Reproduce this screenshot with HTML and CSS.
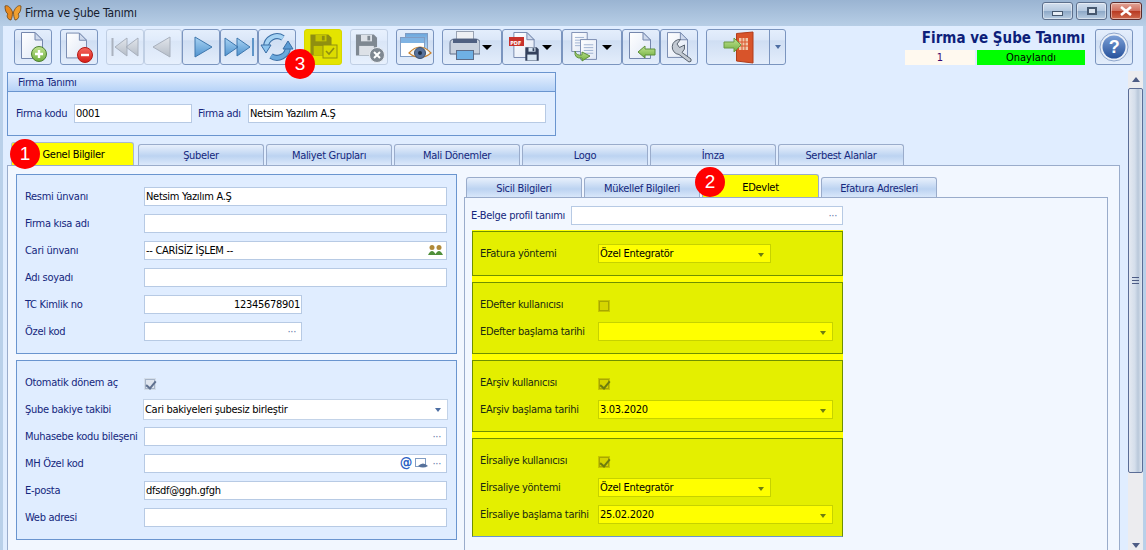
FILE: index.html
```html
<!DOCTYPE html>
<html>
	<head>
		<meta charset="utf-8">
		<title>Firma ve Şube Tanımı</title>
		<link rel="stylesheet" href="styles.css">
	</head>
	<body>
		<svg class="defs">
			<defs>
				<linearGradient id="docFill" x1="0" y1="0" x2="1" y2="1"><stop offset="0" stop-color="#ffffff"/><stop offset="1" stop-color="#dfe7f5"/></linearGradient>
				<linearGradient id="playFill" x1="0" y1="0" x2="0" y2="1"><stop offset="0" stop-color="#a9d3f3"/><stop offset="1" stop-color="#4f93cf"/></linearGradient>
				<linearGradient id="grayFill" x1="0" y1="0" x2="0" y2="1"><stop offset="0" stop-color="#e2e6ec"/><stop offset="1" stop-color="#b4bcc7"/></linearGradient>
				<linearGradient id="greenFill" x1="0" y1="0" x2="0" y2="1"><stop offset="0" stop-color="#c3e592"/><stop offset="1" stop-color="#6fae3e"/></linearGradient>
				<linearGradient id="redFill" x1="0" y1="0" x2="0" y2="1"><stop offset="0" stop-color="#f5695f"/><stop offset="1" stop-color="#d81c17"/></linearGradient>
				<linearGradient id="helpFill" x1="0" y1="0" x2="0" y2="1"><stop offset="0" stop-color="#7b9fd6"/><stop offset="1" stop-color="#26519b"/></linearGradient>
				<linearGradient id="winFill" x1="0" y1="0" x2="0" y2="1"><stop offset="0" stop-color="#6ba6dc"/><stop offset="1" stop-color="#b6d6f2"/></linearGradient>
				<symbol id="doc" viewBox="0 0 22 27">
					<path d="M.5 .5H14L21.5 8V26.5H.5Z" fill="url(#docFill)" stroke="#7587ad"/>
					<path d="M14 .5V8H21.5Z" fill="#cfdaed" stroke="#7587ad"/>
				</symbol>
				<symbol id="floppy" viewBox="0 0 24 24">
					<path d="M.5 .5H20L23.5 4V23.5H.5Z" fill="currentColor"/>
					<rect class="fl-light" x="6" y="1" width="12" height="7"/>
					<rect x="13" y="2" width="3" height="5" fill="currentColor"/>
					<rect class="fl-light" x="4" y="13" width="16" height="10"/>
				</symbol>
				<symbol id="sheet" viewBox="0 0 18 22">
					<path d="M.5 .5H17.5V21.5H.5Z" fill="url(#docFill)" stroke="#7587ad"/>
					<path d="M4 6H14M4 9H14M4 12H14M4 15H14" stroke="#9db0cf"/>
				</symbol>
			</defs>
		</svg>

		<div class="window">
			<div class="titlebar">
				<svg class="butterfly" width="18" height="18" viewBox="0 0 18 18">
					<path d="M8.500 8C6 2 3 1 1 2C1 6 2 9 4 10C2 12 4 16 7 16C8 14 8.500 11 8.500 8Z" fill="#e8891e" stroke="#6b4415" stroke-width=".8"/>
					<path d="M9.500 8C12 2 15 1 17 2C17 6 16 9 14 10C16 12 14 16 11 16C10 14 9.500 11 9.500 8Z" fill="#f0a030" stroke="#6b4415" stroke-width=".8"/>
				</svg>
				<span class="title-text">Firma ve Şube Tanımı</span>
				<div class="win-controls">
					<div class="win-btn"><span class="glyph-min"></span></div>
					<div class="win-btn"><span class="glyph-max"></span></div>
					<div class="win-btn win-close">
						<svg width="14" height="10" viewBox="0 0 14 10"><path d="M2 1L12 9M12 1L2 9" stroke="#fff" stroke-width="2.600"/></svg>
					</div>
				</div>
			</div>

			<div class="body">
				<div class="toolbar">
					<div class="tool">
						<svg class="ico" viewBox="0 0 38 36"><use href="#doc" x="7" y="3" width="22" height="27"/><circle cx="25" cy="25" r="7.500" fill="url(#greenFill)" stroke="#4d7f33"/><path d="M25 21V29M21 25H29" stroke="#fff" stroke-width="2.400"/></svg>
					</div>
					<div class="tool">
						<svg class="ico" viewBox="0 0 38 36"><use href="#doc" x="6" y="3" width="21" height="27"/><circle cx="25" cy="26" r="7.500" fill="url(#redFill)" stroke="#b51a14"/><path d="M21 26H29" stroke="#fff" stroke-width="2.400"/></svg>
					</div>
					<div class="tool-group">
						<div class="tool tool-off">
							<svg class="ico" viewBox="0 0 38 36"><path d="M6.500 9V27" stroke="#aab2bf" stroke-width="2"/><path d="M9 18L21 9V27ZM20 18L32 9V27Z" fill="url(#grayFill)" stroke="#a8b0bd"/></svg>
						</div>
						<div class="tool tool-off">
							<svg class="ico" viewBox="0 0 38 36"><path d="M9 18L26 8V28Z" fill="url(#grayFill)" stroke="#a8b0bd"/></svg>
						</div>
						<div class="tool">
							<svg class="ico" viewBox="0 0 38 36"><path d="M13 8L30 18L13 28Z" fill="url(#playFill)" stroke="#3f77ad"/></svg>
						</div>
						<div class="tool">
							<svg class="ico" viewBox="0 0 38 36"><path d="M5 9L18 18L5 27ZM17 9L30 18L17 27Z" fill="url(#playFill)" stroke="#3f77ad"/><path d="M33 9V27" stroke="#5f95c8" stroke-width="2"/></svg>
						</div>
						<div class="tool">
							<svg class="ico" viewBox="0 0 38 36">
								<path d="M8 18A11 11 0 0 1 25 9" fill="none" stroke="#3a6ea5" stroke-width="6"/>
								<path d="M8 18A11 11 0 0 1 25 9" fill="none" stroke="#a4d2f3" stroke-width="4"/>
								<path d="M30 18A11 11 0 0 1 13 27" fill="none" stroke="#3a6ea5" stroke-width="6"/>
								<path d="M30 18A11 11 0 0 1 13 27" fill="none" stroke="#6aa8dc" stroke-width="4"/>
								<path d="M3 16H13L8 24Z" fill="#8cc4ee" stroke="#3a6ea5"/>
								<path d="M25 20H35L30 12Z" fill="#5b9bd4" stroke="#3a6ea5"/>
							</svg>
						</div>
					</div>
					<div class="tool tool-marked">
						<svg class="ico floppy-olive" viewBox="0 0 38 36"><use href="#floppy" x="5" y="5" width="24" height="22"/><rect x="19" y="16" width="14" height="13" fill="#dcdc00" stroke="#8f8f10"/><path d="M22 22L25 25L30 19" fill="none" stroke="#8f8f10" stroke-width="1.600"/></svg>
					</div>
					<div class="tool tool-off">
						<svg class="ico floppy-gray" viewBox="0 0 38 36"><use href="#floppy" x="5" y="5" width="23" height="22"/><circle cx="27" cy="26" r="7.500" fill="#7f8891" stroke="#e8ecf2"/><path d="M24 23L30 29M30 23L24 29" stroke="#fff" stroke-width="2"/></svg>
					</div>
					<div class="tool">
						<svg class="ico" viewBox="0 0 38 36">
							<rect x="9.500" y="4.500" width="22" height="16" fill="url(#winFill)" stroke="#7f9cc4"/>
							<rect x="4.500" y="8.500" width="24" height="19" fill="#fff" stroke="#7f9cc4"/>
							<rect x="5" y="9" width="23" height="5" fill="#7fb3e3"/>
							<path d="M13 24Q24 12 35 24Q24 33 13 24Z" fill="#f4f4f0" stroke="#c9822e" stroke-width="1.200"/>
							<circle cx="24" cy="24" r="5.500" fill="#56719b" stroke="#39506f"/>
							<circle cx="24" cy="24" r="2" fill="#1f2f45"/>
						</svg>
					</div>
					<div class="tool tool-wide">
						<svg class="ico" viewBox="0 0 38 36">
							<rect x="14.500" y="2.500" width="17" height="12" fill="#eef0f4" stroke="#98a2b3"/>
							<path d="M8 14Q8 10 13 10H33Q38 10 38 14V25H8Z" fill="#c9d1de" stroke="#5d6c88"/>
							<rect x="11" y="10" width="24" height="4" fill="#4f5f80"/>
							<rect x="14.500" y="21.500" width="17" height="9" fill="#6fb0e4" stroke="#5d6c88"/>
						</svg>
						<span class="caret"></span>
					</div>
					<div class="tool tool-wide">
						<svg class="ico floppy-dark" viewBox="0 0 38 36">
							<use href="#doc" x="11" y="3" width="22" height="26"/>
							<rect x="7" y="8" width="15" height="9" fill="#c8322b"/>
							<text class="pdf-mark" x="8.200" y="15.500">PDF</text>
							<use href="#floppy" x="23" y="18" width="14" height="14"/>
						</svg>
						<span class="caret"></span>
					</div>
					<div class="tool tool-wide">
						<svg class="ico" viewBox="0 0 38 36">
							<use href="#sheet" x="9" y="3" width="17" height="20"/>
							<use href="#sheet" x="18" y="10" width="17" height="21"/>
							<path d="M13 22Q14 27 20 26V23L28 27L20 32V29Q12 30 13 22Z" fill="url(#greenFill)" stroke="#5d8f3a"/>
						</svg>
						<span class="caret"></span>
					</div>
					<div class="tool-group">
						<div class="tool">
							<svg class="ico" viewBox="0 0 38 36"><use href="#doc" x="7" y="3" width="22" height="27"/><path d="M16 23L23 17V20H33V26H23V29Z" fill="url(#greenFill)" stroke="#5d8f3a"/></svg>
						</div>
						<div class="tool">
							<svg class="ico" viewBox="0 0 38 36">
								<use href="#doc" x="7" y="3" width="21" height="26"/>
								<path d="M20.500 10.500L17 15L19.500 18.500L24.500 16A7.500 7.500 0 0 1 22 23.500L31 30Q32 33 29 33L19 25.500A7.500 7.500 0 1 1 20.500 10.500Z" fill="#c3cad3" stroke="#59636f"/>
							</svg>
						</div>
					</div>
					<div class="tool tool-split">
						<div class="split-main">
							<svg width="63" height="36" viewBox="0 0 63 36">
								<path d="M29.500 3.500L46 2V33L29.500 31Z" fill="#d8542a" stroke="#b13d1a"/>
								<rect x="32" y="8" width="9" height="12" fill="#f0c7a8"/>
								<path d="M35 8V20M38 8V20M32 12H41M32 16H41" stroke="#d8542a"/>
								<path d="M17 12H27V8L34 15L27 22V18H17Z" fill="url(#greenFill)" stroke="#6a9a42"/>
							</svg>
						</div>
						<div class="split-drop"><span class="caret caret-blue"></span></div>
					</div>
					<div class="head-info">
						<div class="head-title">Firma ve Şube Tanımı</div>
						<div class="head-status">
							<span class="status-num">1</span>
							<span class="status-ok">Onaylandı</span>
						</div>
					</div>
					<div class="tool">
						<svg class="ico" viewBox="0 0 38 36">
							<circle cx="19" cy="18" r="14" fill="#e8eef7" stroke="#8ea6cc"/>
							<circle cx="19" cy="18" r="11.500" fill="url(#helpFill)"/>
							<text class="help-mark" x="19" y="24">?</text>
						</svg>
					</div>
				</div>

				<div class="content">
					<div class="main">
						<div class="group">
							<div class="group-head">Firma Tanımı</div>
							<div class="group-row">
								<label class="lbl lbl-code">Firma kodu</label>
								<div class="input input-code">0001</div>
								<label class="lbl lbl-name">Firma adı</label>
								<div class="input input-name">Netsim Yazılım A.Ş</div>
							</div>
						</div>

						<div class="tabs">
							<div class="tab tab-active tab-first">Genel Bilgiler</div>
							<div class="tab">Şubeler</div>
							<div class="tab">Maliyet Grupları</div>
							<div class="tab">Mali Dönemler</div>
							<div class="tab">Logo</div>
							<div class="tab">İmza</div>
							<div class="tab">Serbest Alanlar</div>
						</div>

						<div class="pane">
							<div class="left-col">
								<div class="panel">
									<div class="row"><label class="lbl lbl-left">Resmi ünvanı</label><div class="input grow">Netsim Yazılım A.Ş</div></div>
									<div class="row"><label class="lbl lbl-left">Firma kısa adı</label><div class="input grow"></div></div>
									<div class="row">
										<label class="lbl lbl-left">Cari ünvanı</label>
										<div class="input grow">-- CARİSİZ İŞLEM --
											<svg class="end-ico" width="15" height="13" viewBox="0 0 15 13">
												<circle cx="4" cy="3.500" r="2.500" fill="#b08a3a"/><circle cx="11" cy="3.500" r="2.500" fill="#b08a3a"/>
												<path d="M0 11Q4 3 8 11ZM7 11Q11 3 15 11Z" fill="#4f8f3a"/>
											</svg>
										</div>
									</div>
									<div class="row"><label class="lbl lbl-left">Adı soyadı</label><div class="input grow"></div></div>
									<div class="row"><label class="lbl lbl-left">TC Kimlik no</label><div class="input input-short num">12345678901</div></div>
									<div class="row"><label class="lbl lbl-left">Özel kod</label><div class="input input-short">&nbsp;<span class="dots">···</span></div></div>
								</div>
								<div class="panel">
									<div class="row"><label class="lbl lbl-left">Otomatik dönem aç</label><span class="check is-on"></span></div>
									<div class="row"><label class="lbl lbl-left">Şube bakiye takibi</label><div class="input grow combo-left">Cari bakiyeleri şubesiz birleştir<span class="caret caret-blue"></span></div></div>
									<div class="row"><label class="lbl lbl-left">Muhasebe kodu bileşeni</label><div class="input grow">&nbsp;<span class="dots">···</span></div></div>
									<div class="row">
										<label class="lbl lbl-left">MH Özel kod</label>
										<div class="input grow">&nbsp;
											<span class="at">@</span>
											<svg class="view-ico" width="13" height="11" viewBox="0 0 13 11"><rect x=".5" y=".5" width="10" height="8" fill="#fff" stroke="#7f9cc4"/><path d="M3 8Q8 3 13 8Q8 11 3 8Z" fill="#56719b"/></svg>
											<span class="dots">···</span>
										</div>
									</div>
									<div class="row"><label class="lbl lbl-left">E-posta</label><div class="input grow">dfsdf@ggh.gfgh</div></div>
									<div class="row"><label class="lbl lbl-left">Web adresi</label><div class="input grow"></div></div>
								</div>
							</div>

							<div class="right-col">
								<div class="subtabs">
									<div class="subtab">Sicil Bilgileri</div>
									<div class="subtab">Mükellef Bilgileri</div>
									<div class="subtab subtab-active">EDevlet</div>
									<div class="subtab">Efatura Adresleri</div>
								</div>
								<div class="subpane">
									<div class="row profile-row">
										<label class="lbl profile-lbl">E-Belge profil tanımı</label>
										<div class="input grow">&nbsp;<span class="dots">···</span></div>
									</div>
									<div class="marked">
										<div class="mark-panel">
											<div class="row"><label class="lbl mark-lbl">EFatura yöntemi</label><div class="input mark-input mark-short">Özel Entegratör<span class="caret caret-olive"></span></div></div>
										</div>
										<div class="mark-panel">
											<div class="row"><label class="lbl mark-lbl">EDefter kullanıcısı</label><span class="check check-olive"></span></div>
											<div class="row"><label class="lbl mark-lbl">EDefter başlama tarihi</label><div class="input mark-input grow"><span class="caret caret-olive"></span></div></div>
										</div>
										<div class="mark-panel">
											<div class="row"><label class="lbl mark-lbl">EArşiv kullanıcısı</label><span class="check check-olive is-on"></span></div>
											<div class="row"><label class="lbl mark-lbl">EArşiv başlama tarihi</label><div class="input mark-input grow">3.03.2020<span class="caret caret-olive"></span></div></div>
										</div>
										<div class="mark-panel mark-last">
											<div class="row"><label class="lbl mark-lbl">Eİrsaliye kullanıcısı</label><span class="check check-olive is-on"></span></div>
											<div class="row"><label class="lbl mark-lbl">Eİrsaliye yöntemi</label><div class="input mark-input mark-short">Özel Entegratör<span class="caret caret-olive"></span></div></div>
											<div class="row"><label class="lbl mark-lbl">Eİrsaliye başlama tarihi</label><div class="input mark-input grow">25.02.2020<span class="caret caret-olive"></span></div></div>
										</div>
									</div>
								</div>
							</div>
						</div>
					</div>

					<div class="scrollbar">
						<div class="sb-btn"><span class="sb-up"></span></div>
						<div class="sb-thumb"><span class="sb-grip"></span></div>
						<div class="sb-track"><span class="sb-down"></span></div>
					</div>
				</div>
			</div>

			<span class="badge badge-1">1</span>
			<span class="badge badge-2">2</span>
			<span class="badge badge-3">3</span>
		</div>
	</body>
</html>
```

FILE: styles.css
```css
* {
	box-sizing: border-box;
}

html, body {
	margin: 0;
	padding: 0;
}

body {
	width: 1146px;
	height: 550px;
	overflow: hidden;
	font-family: "DejaVu Sans Condensed", "DejaVu Sans", sans-serif;
	font-stretch: condensed;
	font-size: 11px;
	letter-spacing: -.3px;
	color: #000;
}

.defs {
	position: absolute;
	width: 0;
	height: 0;
}

.window {
	position: relative;
	width: 1146px;
	height: 550px;
	display: flex;
	flex-direction: column;
	overflow: hidden;
	background: #b9d0e9;
}

/* title bar */
.titlebar {
	height: 26px;
	flex: none;
	display: flex;
	align-items: center;
	padding-left: 4px;
	background: linear-gradient(#9ab4d2, #b7cee6);
}

.butterfly {
	margin-right: 3px;
}

.title-text {
	font-size: 12px;
	letter-spacing: -.15px;
	color: #16202e;
}

.win-controls {
	margin-left: auto;
	margin-right: 4px;
	margin-top: -4px;
	display: flex;
	gap: 3px;
}

.win-btn {
	width: 31px;
	height: 18px;
	border: 1px solid #5c6f8c;
	border-radius: 3px;
	display: flex;
	align-items: center;
	justify-content: center;
	background: linear-gradient(#d3dfee, #b5c9e0 48%, #8ea9c7 52%, #b9cde2);
	box-shadow: inset 0 0 0 1px rgba(255, 255, 255, .45);
}

.win-close {
	width: 32px;
	border-color: #5b2a2a;
	background: linear-gradient(#e2a597, #d07060 48%, #b83a22 52%, #cf6a4e);
}

.glyph-min {
	width: 11px;
	height: 5px;
	margin-top: 4px;
	background: #e8eef5;
	border: 1px solid #46586f;
}

.glyph-max {
	width: 10px;
	height: 8px;
	background: #dbe4ee;
	border: 2px solid #46586f;
}

/* window body */
.body {
	flex: 1;
	min-height: 0;
	margin: 0 3px;
	background: #e0edff;
	display: flex;
	flex-direction: column;
}

.toolbar {
	flex: none;
	height: 42px;
	padding: 3px 10px 0 11px;
	display: flex;
	gap: 8px;
}

.tool-group {
	display: flex;
}

.tool {
	position: relative;
	width: 38px;
	height: 36px;
	flex: none;
	border: 1px solid #7b95bf;
	border-radius: 3px;
	background: linear-gradient(#e4eefc, #dbe7f8 28%, #cfdef3 32%, #e3edfb);
}

.tool-off {
	border-color: #c0cfe4;
	background: linear-gradient(#e8f1fd, #e0ebfb 30%, #dae6f7 34%, #e7f0fd);
}

.tool-marked {
	border-color: #d7d700;
	background: #e4e400;
}

.tool-wide {
	width: 60px;
	margin-right: -8px;
}

.tool-wide + .tool-group {
	margin-left: 0;
}

.tool-split {
	width: 80px;
	display: flex;
}

.split-main {
	width: 63px;
	border-right: 1px solid #7b95bf;
}

.split-drop {
	flex: 1;
	display: flex;
	align-items: center;
	justify-content: center;
}

.ico {
	position: absolute;
	left: -1px;
	top: -1px;
	width: 38px;
	height: 36px;
}

.fl-light {
	fill: var(--fl-light, #e4e8ee);
}

.floppy-olive {
	color: #8f8f10;
	--fl-light: #c4c400;
}

.floppy-gray {
	color: #7f8891;
	--fl-light: #dde1e7;
}

.floppy-dark {
	color: #33415c;
	--fl-light: #d6e4f2;
}

.pdf-mark {
	font-family: "DejaVu Sans", sans-serif;
	font-size: 5.500px;
	font-weight: bold;
	letter-spacing: 0;
	fill: #fff;
}

.help-mark {
	font-family: "Liberation Sans", sans-serif;
	font-size: 18px;
	font-weight: bold;
	fill: #fff;
	text-anchor: middle;
}

.caret {
	position: absolute;
	right: 9px;
	top: 15px;
	width: 0;
	height: 0;
	border-left: 5px solid transparent;
	border-right: 5px solid transparent;
	border-top: 5px solid #000;
}

.caret-blue,
.caret-olive {
	top: 8px;
	right: 6px;
	border-left-width: 3.500px;
	border-right-width: 3.500px;
	border-top: 4px solid #4d6ea3;
}

.caret-olive {
	border-top-color: #6e7d10;
}

.split-drop .caret {
	position: static;
}

.head-info {
	margin-left: auto;
	margin-right: 2px;
	width: 180px;
	display: flex;
	flex-direction: column;
	align-items: stretch;
}

.head-title {
	height: 18px;
	text-align: right;
	font-size: 15px;
	line-height: 18px;
	font-weight: bold;
	letter-spacing: 0;
	color: #0d1f7a;
	white-space: nowrap;
}

.head-status {
	margin-top: 3px;
	display: flex;
	gap: 2px;
	height: 15px;
	line-height: 15px;
	letter-spacing: 0;
	text-align: center;
}

.status-num {
	width: 70px;
	background: #fff9ef;
	color: #3a0a6e;
}

.status-ok {
	width: 108px;
	background: #00ff00;
}

/* content */
.content {
	flex: 1;
	min-height: 0;
	display: flex;
}

.main {
	flex: 1;
	min-width: 0;
	display: flex;
	flex-direction: column;
	padding: 4px 8px 0 4px;
}

.lbl {
	color: #14277d;
	white-space: nowrap;
}

.input {
	position: relative;
	height: 19px;
	line-height: 17px;
	padding-left: 1px;
	background: #fff;
	border: 1px solid #b7cae4;
	white-space: nowrap;
}

.grow {
	flex: 1;
}

.group {
	width: 549px;
	height: 64px;
	flex: none;
	border: 1px solid #6a95cf;
	border-top: 0;
}

.group-head {
	height: 20px;
	margin: 0 -1px;
	padding-left: 10px;
	line-height: 19px;
	color: #14277d;
	border: 1px solid #6a95cf;
	background: linear-gradient(#e6f0ff, #b7d3f7);
}

.group-row {
	display: flex;
	align-items: center;
	height: 19px;
	margin-top: 12px;
	padding-left: 8px;
}

.lbl-code {
	width: 58px;
	flex: none;
}

.lbl-name {
	width: 50px;
	flex: none;
}

.input-code {
	width: 118px;
	margin-right: 6px;
}

.input-name {
	width: 298px;
}

.tabs {
	flex: none;
	height: 24px;
	margin-top: 6px;
	margin-left: 4px;
	display: flex;
	align-items: flex-end;
	gap: 2px;
}

.tab {
	width: 126px;
	height: 21px;
	margin-bottom: 1px;
	line-height: 22px;
	text-align: center;
	color: #14277d;
	border: 1px solid #9aaccb;
	border-bottom: 0;
	border-radius: 3px 3px 0 0;
	background: linear-gradient(#e8f0fc, #bcd3f1 55%, #dce9fb);
}

.tab-active {
	height: 24px;
	margin-bottom: 0;
	line-height: 24px;
	background: #ffff00;
	color: #000;
	border-color: #a9b8cf;
}

.tab-first {
	width: 123px;
	margin-right: 2px;
	padding-left: 2px;
}

.pane {
	flex: 1;
	min-height: 0;
	margin-top: -1px;
	display: flex;
	overflow: hidden;
	background: #f2f7ff;
	border: 1px solid #9aaccb;
	border-bottom: 0;
}

.left-col {
	width: 456px;
	flex: none;
	padding: 8px 0 0 8px;
	display: flex;
	flex-direction: column;
	gap: 6px;
}

.panel {
	width: 441px;
	padding: 12px 9px 12px 8px;
	display: flex;
	flex-direction: column;
	gap: 8px;
	background: #e0edff;
	border: 1px solid #6a95cf;
}

.row {
	display: flex;
	align-items: center;
	height: 19px;
}

.lbl-left {
	width: 119px;
	flex: none;
}

.input-short {
	width: 158px;
}

.num {
	text-align: right;
	padding-right: 1px;
}

.dots {
	position: absolute;
	right: 5px;
	top: 0;
	color: #5f79a8;
}

.end-ico {
	position: absolute;
	right: 3px;
	top: 2px;
}

.at {
	position: absolute;
	right: 34px;
	top: -1px;
	font-size: 14px;
	font-weight: bold;
	color: #2b5fc4;
}

.view-ico {
	position: absolute;
	right: 18px;
	top: 3px;
}

.combo-left {
	height: 21px;
	margin: 0 -1px;
	line-height: 19px;
	border-color: #c3d3e8;
}

.check {
	position: relative;
	width: 10px;
	height: 10px;
	margin: 2px 0 0 1px;
	background: #dfe5ee;
	border: 1px solid #a6b4c8;
	box-shadow: 0 0 0 1px #d3dde9;
}

.is-on::after {
	content: "";
	position: absolute;
	left: 2px;
	top: -1px;
	width: 4px;
	height: 8px;
	border-right: 2px solid #5f7190;
	border-bottom: 2px solid #5f7190;
	transform: rotate(40deg);
}

.check-olive {
	background: #d5d500;
	border-color: #a8a800;
	box-shadow: 0 0 0 1px #c6c600;
}

.check-olive.is-on::after {
	border-color: #6e7d10;
}

/* sub tabs */
.right-col {
	flex: 1;
	min-width: 0;
	padding: 8px 11px 0 0;
	display: flex;
	flex-direction: column;
}

.subtabs {
	flex: none;
	height: 24px;
	padding-left: 2px;
	display: flex;
	align-items: flex-end;
	gap: 2px;
}

.subtab {
	width: 116px;
	height: 21px;
	line-height: 22px;
	text-align: center;
	color: #14277d;
	border: 1px solid #9aaccb;
	border-bottom: 0;
	border-radius: 3px 3px 0 0;
	background: linear-gradient(#e8f0fc, #bcd3f1 55%, #dce9fb);
}

.subtab-active {
	width: 117px;
	height: 24px;
	line-height: 25px;
	background: #ffff00;
	color: #000;
}

.subpane {
	flex: 1;
	min-height: 0;
	margin-top: -1px;
	padding: 8px 0 0 6px;
	border: 1px solid #9aaccb;
	border-bottom: 0;
}

.profile-row {
	width: 372px;
}

.profile-lbl {
	width: 100px;
	flex: none;
}

.marked {
	width: 371px;
	margin-top: 5px;
	margin-left: 1px;
	padding-top: 1px;
	display: flex;
	flex-direction: column;
	gap: 6px;
	background: #ffff00;
}

.mark-panel {
	padding: 12px 9px 12px 7px;
	display: flex;
	flex-direction: column;
	gap: 8px;
	background: #e4ef00;
	border: 1px solid #6f9000;
}

.mark-last {
	border-bottom-color: #6a95cf;
}

.mark-lbl {
	width: 118px;
	flex: none;
	color: #1a2a10;
}

.mark-input {
	background: #ffff00;
	border-color: #c6d200;
}

.mark-short {
	width: 173px;
	flex: none;
}

/* scroll bar */
.scrollbar {
	width: 15px;
	flex: none;
	margin-top: 3px;
	display: flex;
	flex-direction: column;
	background: #ececef;
}

.sb-btn {
	height: 17px;
	flex: none;
	display: flex;
	align-items: center;
	justify-content: center;
}

.sb-up {
	width: 0;
	height: 0;
	border-left: 4px solid transparent;
	border-right: 4px solid transparent;
	border-bottom: 5px solid #4d5c85;
}

.sb-thumb {
	height: 385px;
	flex: none;
	display: flex;
	align-items: center;
	justify-content: center;
	border: 1px solid #5b6d96;
	border-radius: 2px;
	background: linear-gradient(90deg, #e4e9f1, #d4deeb 45%, #b9c8da 70%, #dfe6f0);
}

.sb-grip {
	width: 7px;
	height: 7px;
	border-top: 1px solid #4d5c85;
	border-bottom: 1px solid #4d5c85;
	background: linear-gradient(transparent 2px, #4d5c85 2px, #4d5c85 3px, transparent 3px);
}

.sb-track {
	flex: 1;
	display: flex;
	align-items: flex-end;
	justify-content: center;
	padding-bottom: 2px;
}

.sb-down {
	width: 0;
	height: 0;
	border-left: 4px solid transparent;
	border-right: 4px solid transparent;
	border-top: 5px solid #4d5c85;
}

/* numbered callouts over the form */
.badge {
	position: absolute;
	width: 30px;
	height: 30px;
	border-radius: 50%;
	background: #ff0000;
	color: #fff;
	font-family: "Liberation Sans", sans-serif;
	font-size: 19px;
	letter-spacing: 0;
	line-height: 29px;
	text-align: center;
}

.badge-1 {
	left: 10px;
	top: 139px;
}

.badge-2 {
	left: 695px;
	top: 167px;
}

.badge-3 {
	left: 285px;
	top: 49px;
}
```
